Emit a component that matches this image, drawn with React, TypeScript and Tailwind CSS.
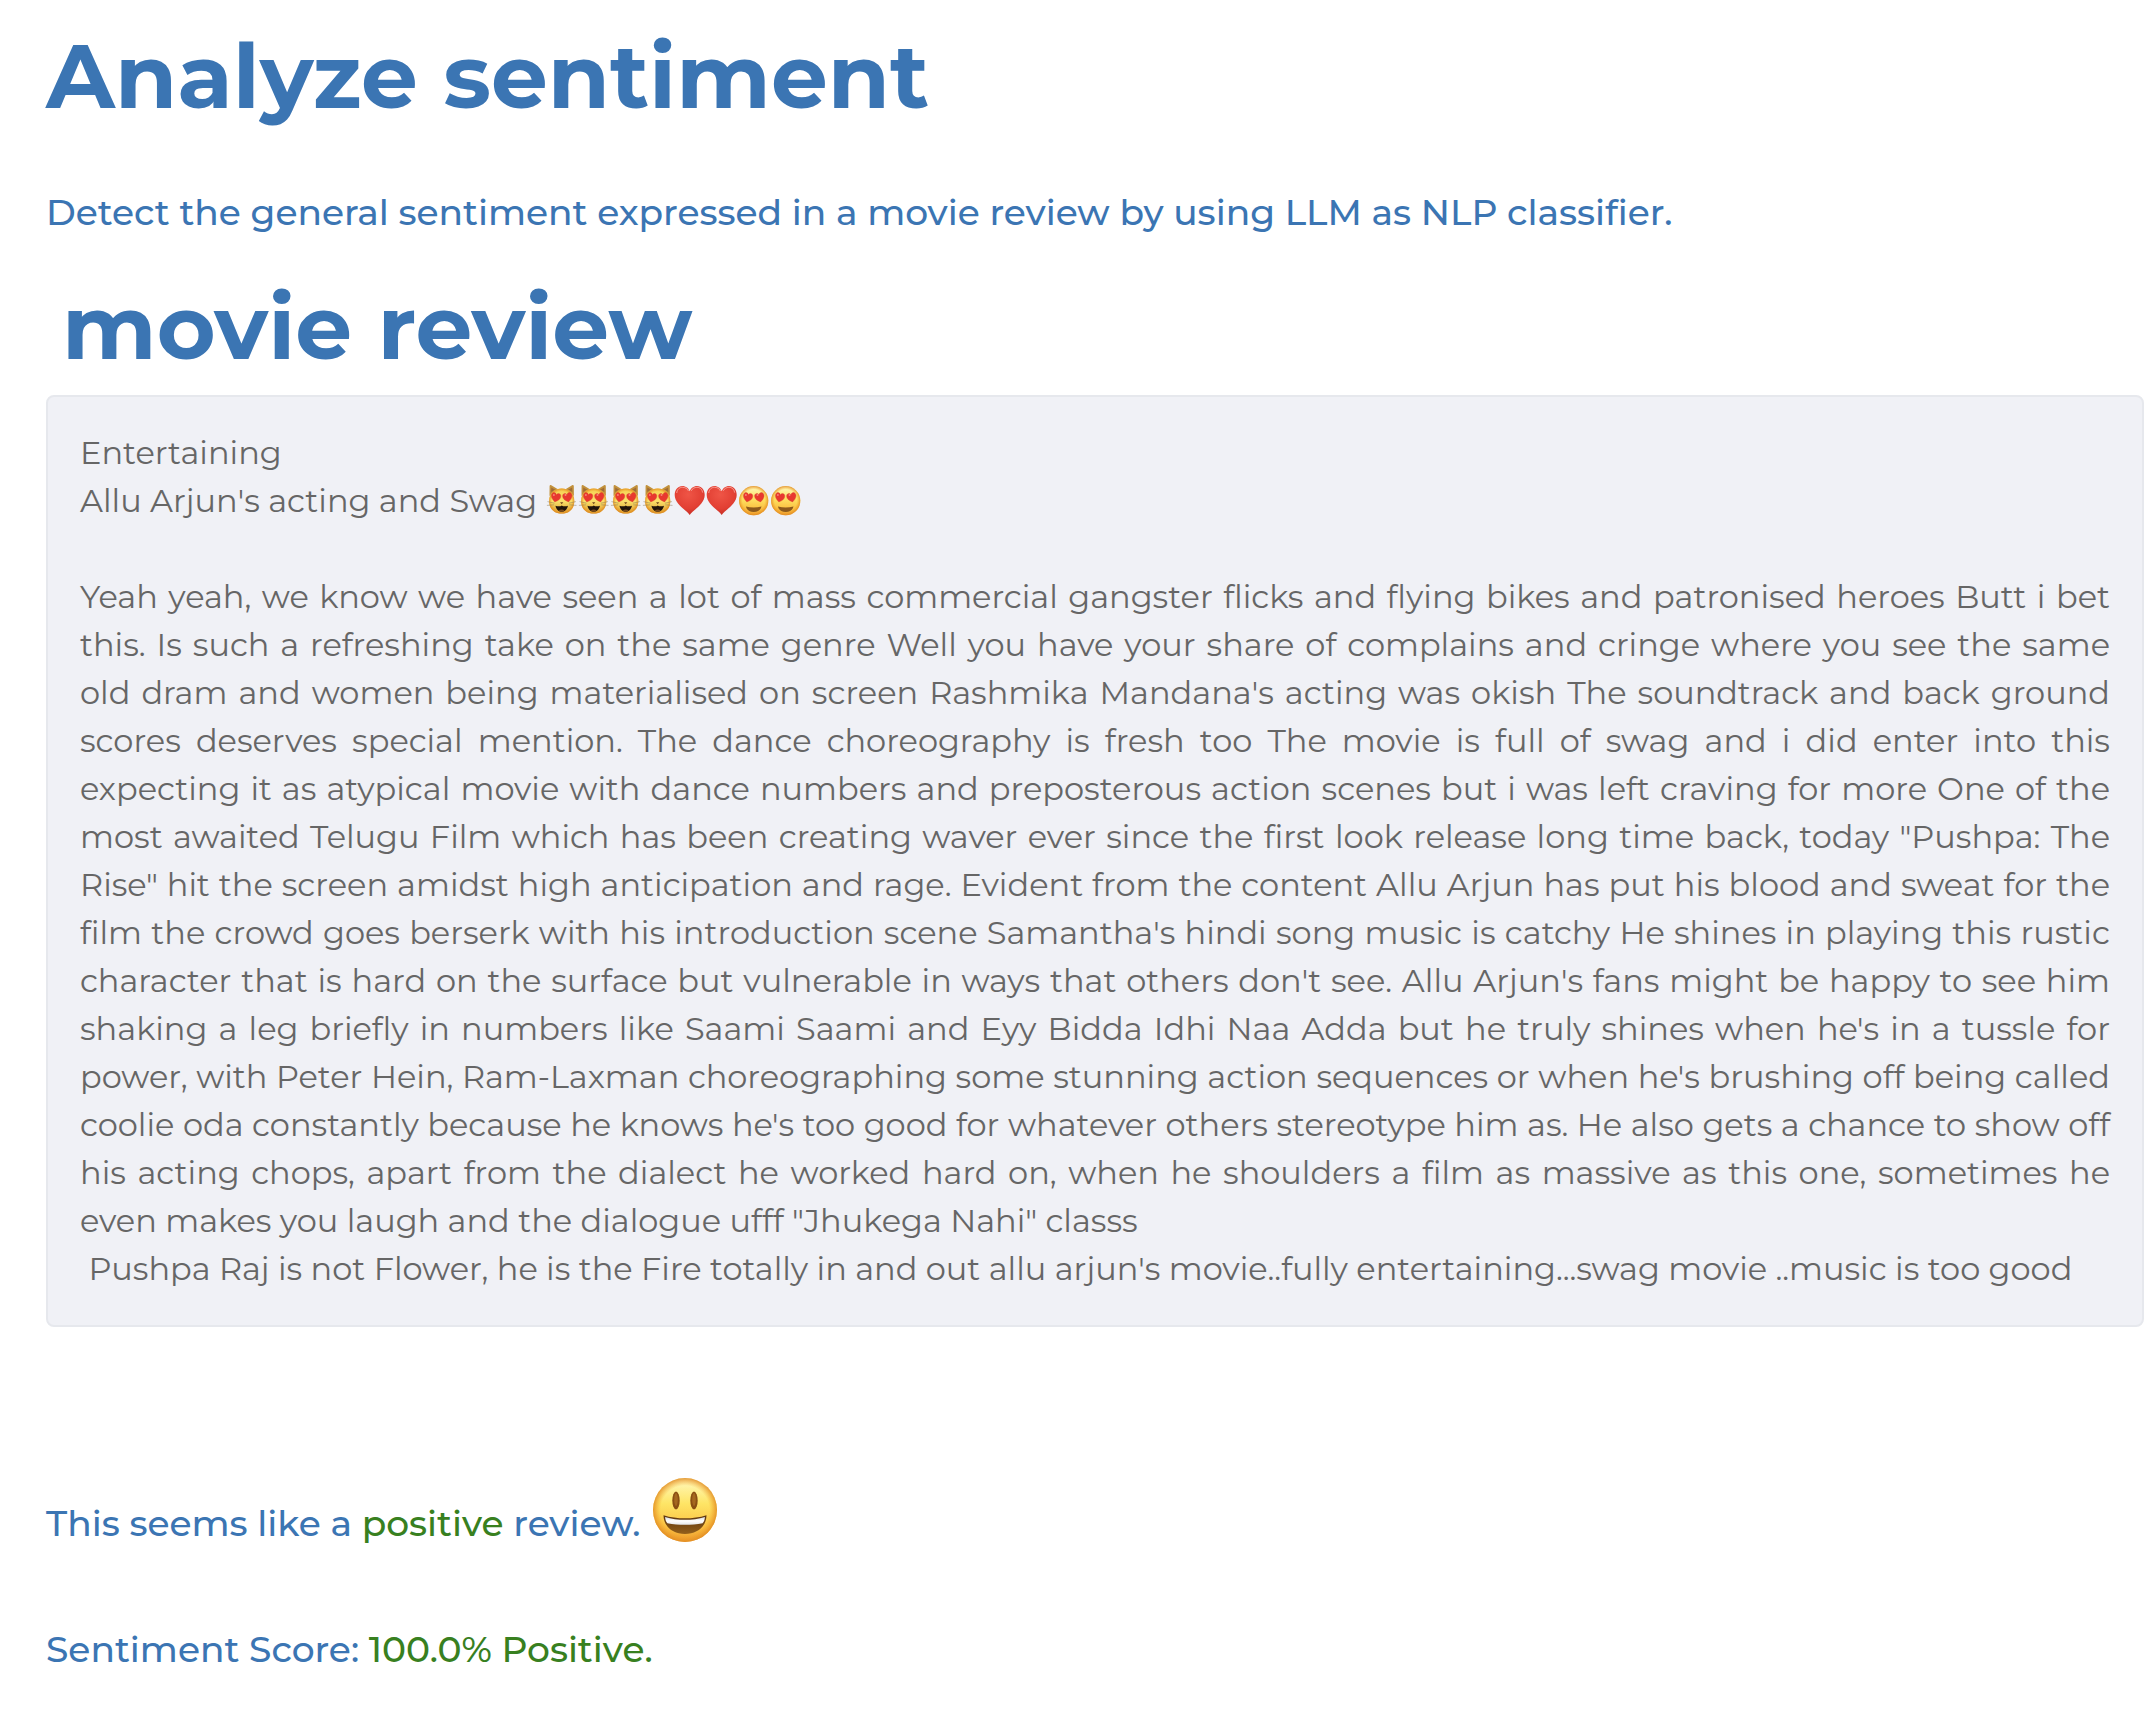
const reviewBody =
  'Yeah yeah, we know we have seen a lot of mass commercial gangster flicks and flying bikes and patronised heroes Butt i bet ' +
  'this. Is such a refreshing take on the same genre Well you have your share of complains and cringe where you see the same ' +
  "old dram and women being materialised on screen Rashmika Mandana's acting was okish The soundtrack and back ground " +
  'scores deserves special mention. The dance choreography is fresh too The movie is full of swag and i did enter into this ' +
  'expecting it as atypical movie with dance numbers and preposterous action scenes but i was left craving for more One of the ' +
  'most awaited Telugu Film which has been creating waver ever since the first look release long time back, today "Pushpa: The ' +
  'Rise" hit the screen amidst high anticipation and rage. Evident from the content Allu Arjun has put his blood and sweat for the ' +
  "film the crowd goes berserk with his introduction scene Samantha's hindi song music is catchy He shines in playing this rustic " +
  "character that is hard on the surface but vulnerable in ways that others don't see. Allu Arjun's fans might be happy to see him " +
  "shaking a leg briefly in numbers like Saami Saami and Eyy Bidda Idhi Naa Adda but he truly shines when he's in a tussle for " +
  "power, with Peter Hein, Ram-Laxman choreographing some stunning action sequences or when he's brushing off being called " +
  "coolie oda constantly because he knows he's too good for whatever others stereotype him as. He also gets a chance to show off " +
  'his acting chops, apart from the dialect he worked hard on, when he shoulders a film as massive as this one, sometimes he ' +
  'even makes you laugh and the dialogue ufff "Jhukega Nahi" classs';

/* Gradients shared by all the emoji drawings. */
function EmojiDefs() {
  return (
    <svg className="absolute h-0 w-0" aria-hidden="true">
      <defs>
        <linearGradient id="face" x1="0" y1="0" x2="0" y2="1">
          <stop offset="0" stopColor="#fff9c0" />
          <stop offset="0.4" stopColor="#fee566" />
          <stop offset="0.75" stopColor="#fbc344" />
          <stop offset="1" stopColor="#ee9f30" />
        </linearGradient>
        <radialGradient id="rim" cx="0.5" cy="0.5" r="0.5">
          <stop offset="0.76" stopColor="#f3a026" stopOpacity="0" />
          <stop offset="1" stopColor="#e08a22" stopOpacity="0.85" />
        </radialGradient>
        <linearGradient id="fur" x1="0" y1="0" x2="0" y2="1">
          <stop offset="0" stopColor="#f6d353" />
          <stop offset="0.5" stopColor="#fbe06a" />
          <stop offset="1" stopColor="#d99a2c" />
        </linearGradient>
        <radialGradient id="heart" cx="0.45" cy="0.3" r="0.75">
          <stop offset="0" stopColor="#ef5546" />
          <stop offset="0.65" stopColor="#e23f33" />
          <stop offset="1" stopColor="#bf2a22" />
        </radialGradient>
        <linearGradient id="mouth" x1="0" y1="0" x2="0" y2="1">
          <stop offset="0" stopColor="#5b3410" />
          <stop offset="1" stopColor="#93601b" />
        </linearGradient>
        <linearGradient id="teeth" x1="0" y1="0" x2="0" y2="1">
          <stop offset="0" stopColor="#d5dade" />
          <stop offset="0.5" stopColor="#ffffff" />
          <stop offset="1" stopColor="#e3e6ea" />
        </linearGradient>
      </defs>
    </svg>
  );
}

const emojiClass = 'inline-block h-8 w-8 align-[-4px]';
const emojiViewBox = '-1.5 0 32 32';

const eyePath = 'M0 9C-3.4 7-5.2 4.6-4.6 2C-4-.6-1-.8 0 1.7C1-.8 4-.6 4.6 2C5.2 4.6 3.4 7 0 9Z';

function HeartEyes() {
  return (
    <g fill="#e8382f" stroke="#cf3a28" strokeWidth="0.3">
      <path d={eyePath} transform="translate(9.4 9) rotate(12 0 4)" />
      <path d={eyePath} transform="translate(21 9) rotate(-12 0 4)" />
      <ellipse cx="7.4" cy="11" rx="1" ry="0.7" fill="#ff9d8e" stroke="none" />
      <ellipse cx="19" cy="11" rx="1" ry="0.7" fill="#ff9d8e" stroke="none" />
    </g>
  );
}

const catHead = 'M15.2 4.6C22.6 4.6 27.6 9.6 27.8 16.8C28 24.6 22.8 29.6 15.2 29.6S2.4 24.6 2.6 16.8C2.8 9.6 7.8 4.6 15.2 4.6Z';

function CatEmoji() {
  return (
    <svg viewBox={emojiViewBox} className={emojiClass} role="img" aria-label="Smiling cat with heart eyes">
      <path d="M3 12L3.1 2C3.2.9 4 .8 4.8 1.2L11.4 5.2ZM27.4 12L27.3 2C27.2.9 26.4.8 25.6 1.2L19 5.2Z" fill="#c2913c" />
      <path d="M4.6 8L4.8 3.4L8.8 5.8ZM25.8 8L25.6 3.4L21.6 5.8Z" fill="#a06c35" />
      <path d={catHead} fill="url(#fur)" />
      <path d={catHead} fill="url(#rim)" />
      <HeartEyes />
      <path d="M13.6 18.2h3.2L15.2 20.2Z" fill="#70451c" />
      <path d="M9 21.8C11 22.6 13.8 22.6 15.2 21.4C16.6 22.6 19.4 22.6 21.4 21.8C20.8 25.4 18.4 27.8 15.2 27.8S9.6 25.4 9 21.8Z" fill="#20140a" />
      <path d="M12.2 26.4Q15.2 24.8 18.2 26.4Q15.2 29 12.2 26.4Z" fill="#7a4c1c" />
      <path d="M1 17.6L8 19.2M.4 21.4L7.6 20.8M29.4 17.6L22.4 19.2M30 21.4L22.8 20.8" stroke="#8a7a58" strokeWidth="0.5" fill="none" />
    </svg>
  );
}

function HeartEmoji() {
  return (
    <svg viewBox={emojiViewBox} className={emojiClass} role="img" aria-label="Red heart">
      <path
        d="M15.2 31C12.7 26.6.2 20.4.2 11C.2 5.4 3.6 1.9 7.8 1.9C11.4 1.9 14.2 4.2 15.2 7.2C16.2 4.2 19 1.9 22.6 1.9C26.8 1.9 30.2 5.4 30.2 11C30.2 20.4 17.7 26.6 15.2 31Z"
        fill="url(#heart)"
      />
      <path d="M2.2 9C2.8 5 5.4 3.2 8.2 3.3C10.8 3.4 12.8 4.6 14 7M16.8 6.8C18 4.4 20 3.4 22.4 3.3C25.2 3.2 27.6 5 28.2 8.6" stroke="#ffc0b6" strokeWidth="0.9" fill="none" opacity="0.75" />
    </svg>
  );
}

function HeartEyesEmoji() {
  return (
    <svg viewBox={emojiViewBox} className={emojiClass} role="img" aria-label="Smiling face with heart eyes">
      <circle cx="15.2" cy="16.7" r="14.6" fill="url(#face)" />
      <circle cx="15.2" cy="16.7" r="14.6" fill="url(#rim)" />
      <HeartEyes />
      <path d="M7.4 22.4Q15.2 24.6 23 22.4C22.2 26 19.2 28 15.2 28S8.2 26 7.4 22.4Z" fill="#8d5a1c" />
    </svg>
  );
}

function GrinEmoji() {
  return (
    <svg viewBox="0 0 64 64" className="ml-3 inline-block h-16 w-16 align-[-6px]" role="img" aria-label="Grinning face with big eyes">
      <circle cx="32" cy="32" r="32" fill="url(#face)" />
      <circle cx="32" cy="32" r="32" fill="url(#rim)" />
      <ellipse cx="23" cy="22.5" rx="3.7" ry="9" fill="#8a4f12" />
      <ellipse cx="41" cy="22.5" rx="3.7" ry="9" fill="#8a4f12" />
      <ellipse cx="23" cy="21.5" rx="1.8" ry="6.4" fill="#a5681f" />
      <ellipse cx="41" cy="21.5" rx="1.8" ry="6.4" fill="#a5681f" />
      <path d="M10.5 37.2C24 41.4 40 41.4 53.5 37.2C53.4 48.6 44 56 32 56S10.6 48.6 10.5 37.2Z" fill="url(#mouth)" />
      <path d="M12 39C25 42.8 39 42.8 52 39C51.6 42 51 43.8 49.6 45.2C38 47.4 26 47.4 14.4 45.2C13 43.8 12.4 42 12 39Z" fill="url(#teeth)" />
    </svg>
  );
}

export default function App() {
  return (
    <main className="min-h-screen bg-white pr-[10px] pb-6 pl-[46px] font-['Montserrat','Inter',sans-serif] text-[#3b75b3]">
      <EmojiDefs />
      <h1 className="pt-6 text-[90px] leading-[104px] font-bold">Analyze sentiment</h1>
      <p className="mt-[60px] text-[36px] leading-[48px] font-medium">
        Detect the general sentiment expressed in a movie review by using LLM as NLP classifier.
      </p>
      <h2 className="mt-[39px] ml-4 text-[90px] leading-[104px] font-bold">movie review</h2>
      <section className="mt-4 rounded-lg border-2 border-[#e6e8ed] bg-[#f0f1f6] p-8 text-[32px] leading-[48px] text-[#666666]">
        <p>Entertaining</p>
        <p className="h-12">
          Allu Arjun's acting and Swag <CatEmoji />
          <CatEmoji />
          <CatEmoji />
          <CatEmoji />
          <HeartEmoji />
          <HeartEmoji />
          <HeartEyesEmoji />
          <HeartEyesEmoji />
        </p>
        <p className="mt-12 text-justify">{reviewBody}</p>
        <p className="whitespace-pre-wrap">
          {" Pushpa Raj is not Flower, he is the Fire totally in and out allu arjun's movie..fully entertaining...swag movie ..music is too good"}
        </p>
      </section>
      <p className="mt-[148px] text-[36px] leading-[96px] font-medium">
        This seems like a <span className="text-[#38801f]">positive</span> review.
        <GrinEmoji />
      </p>
      <p className="mt-[54px] text-[36px] leading-[48px] font-medium">
        Sentiment Score: <span className="text-[#38801f]">100.0% Positive.</span>
      </p>
    </main>
  );
}
